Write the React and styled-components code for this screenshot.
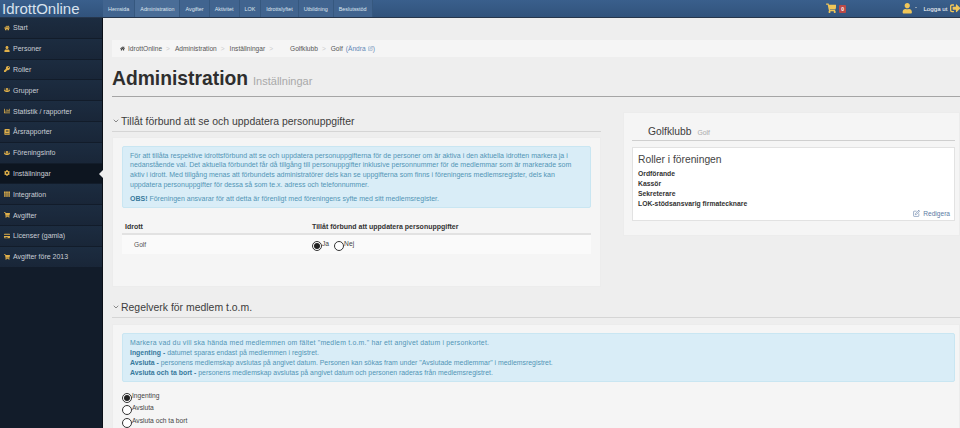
import React from "react";
import styled, { createGlobalStyle } from "styled-components";
import {
  FaHome, FaUser, FaKey, FaUsers, FaChartBar, FaBook, FaCog, FaTh,
  FaShoppingCart, FaCreditCard, FaSignOutAlt,
} from "react-icons/fa";
import { FiEdit, FiChevronDown } from "react-icons/fi";

const GlobalStyle = createGlobalStyle`
  html, body { margin: 0; padding: 0; height: 100%; overflow: hidden; }
  body { font-family: "Liberation Sans", Arial, sans-serif; background: #eeeeee; color: #333; }
  * { box-sizing: border-box; }
`;

const Page = styled.div`
  width: 960px;
  height: 428px;
  display: flex;
  flex-direction: column;
  overflow: hidden;
`;

const TopBar = styled.header`
  height: 18px;
  flex: none;
  display: flex;
  align-items: center;
  background: linear-gradient(#3a5f8c, #31537c);
  border-bottom: 1px solid #26364c;
  color: #fff;
`;

const Logo = styled.div`
  width: 103px;
  flex: none;
  font-size: 15px;
  color: #d8e2ee;
  padding-left: 2px;
`;

const TopNav = styled.nav`
  display: flex;
  height: 17px;
`;

const TopLink = styled.a`
  display: flex;
  align-items: center;
  padding: 0 5px;
  font-size: 5.4px;
  color: #dfe6ef;
  background: ${(p) => (p.$active ? "#4a6d97" : "#41648f")};
  border-right: 1px solid #36587f;
`;

const TopRight = styled.div`
  margin-left: auto;
  display: flex;
  align-items: center;
  color: #f0c659;
  font-size: 10.5px;
`;

const CartBadge = styled.span`
  background: #b94a48;
  color: #fff;
  font-size: 5px;
  font-weight: bold;
  border-radius: 1px;
  padding: 1px 2px;
  margin: 0 56px 0 3px;
`;

const Caret = styled.span`
  width: 0;
  height: 0;
  margin: 0 6px 2px 3px;
  border: 1.5px solid transparent;
  border-top-color: #ddd;
`;

const LogoutText = styled.span`
  font-size: 6.2px;
  color: #fff;
  margin-right: 2px;
`;

const Body = styled.div`
  flex: 1;
  display: flex;
  min-height: 0;
`;

const Sidebar = styled.aside`
  width: 103px;
  flex: none;
  background: #121c2a;
  border-right: 1px solid #0a0f17;
`;

const SideItem = styled.div`
  height: 20.8px;
  position: relative;
  display: flex;
  align-items: center;
  gap: 3px;
  padding-left: 4px;
  font-size: 7px;
  color: #c9ced5;
  background: ${(p) => (p.$active ? "#0d1520" : "linear-gradient(#1c2c40, #192638)")};
  border-bottom: 1px solid #121c2a;
  svg { width: 6px; height: 6px; color: #e0b04a; flex: none; }
`;

const ActiveArrow = styled.span`
  position: absolute;
  right: -1px;
  top: 6px;
  border: 4px solid transparent;
  border-right-color: #eeeeee;
`;

const Main = styled.main`
  flex: 1;
  min-width: 0;
  padding: 22px 0 0 9px;
`;

const Breadcrumb = styled.div`
  height: 17px;
  display: flex;
  align-items: center;
  padding-left: 8px;
  font-size: 6.6px;
  color: #555;
  background: #f5f5f5;
  svg { width: 5px; height: 5px; margin-right: 3px; color: #444; }
`;

const Crumb = styled.span``;

const Sep = styled.span`
  color: #ccc;
  margin: 0 ${(p) => p.$right || 5}px 0 4px;
`;

const EditLink = styled.span`
  color: #5f87b5;
  margin-left: 3px;
  display: inline-flex;
  align-items: center;
  svg { color: #5f87b5; margin: 0 0 0 2px; }
`;

const PageHead = styled.div`
  height: 31px;
  margin-top: 9px;
  border-bottom: 1px solid #a5a5a5;
  display: flex;
  align-items: baseline;
  gap: 5px;
`;

const Title = styled.h1`
  margin: 0;
  font-size: 19.3px;
  line-height: 25px;
  font-weight: bold;
  color: #2e2e2e;
`;

const Subtitle = styled.small`
  font-size: 11px;
  color: #a9a9a9;
`;

const Columns = styled.div`
  display: flex;
  align-items: flex-start;
  margin-top: 14px;
`;

const LeftCol = styled.div`
  width: 489px;
  flex: none;
`;

const RightCol = styled.div`
  width: 337px;
  margin-left: 22px;
`;

const SectionHead = styled.div`
  height: ${(p) => p.$h || 21}px;
  padding-top: ${(p) => p.$pt || 0}px;
  display: flex;
  align-items: center;
  gap: 1px;
  font-size: 10.45px;
  color: #3d3d3d;
  border-bottom: 1px solid #d5d5d5;
  svg { width: 8px; height: 8px; color: #555; }
`;

const Panel = styled.section`
  margin-top: 5px;
  background: #f5f5f5;
  border: 1px solid #ececec;
  padding: 8px 9px 0;
  height: ${(p) => p.$h}px;
`;

const Alert = styled.div`
  background: #d9edf7;
  border: 1px solid #c9e6f2;
  border-radius: 2px;
  color: #5295b6;
  font-size: ${(p) => p.$size}px;
  line-height: ${(p) => p.$lh}px;
  padding: 3.5px 7px;
  p { margin: 0 0 4.5px; }
  p:last-child { margin: 0; }
  b { color: #37799c; }
`;

const AlertLead = styled.div`
  letter-spacing: 0.2px;
`;

const TableHead = styled.div`
  display: grid;
  grid-template-columns: 187px 1fr;
  margin-top: 15px;
  padding: 0 3px 2px;
  border-bottom: 2px solid #e2e2e2;
  font-size: 7px;
  line-height: 8px;
  font-weight: bold;
  color: #333;
`;

const TableRow = styled.div`
  display: grid;
  grid-template-columns: 178px 1fr;
  align-items: center;
  height: 19px;
  background: #fafafa;
  font-size: 6.6px;
  color: #555;
  padding-left: 12px;
`;

const RadioCell = styled.div`
  display: flex;
  padding-top: 1px;
`;

const RadioLabel = styled.label`
  display: flex;
  align-items: flex-start;
  font-size: 6.7px;
  line-height: 8px;
  color: #444;
  margin-right: 5px;
  height: ${(p) => p.$h || "auto"};
`;

const Radio = styled.span`
  width: 10px;
  height: 10px;
  flex: none;
  margin-top: 1px;
  border-radius: 50%;
  border: 1px solid #333;
  background: #fff;
  display: flex;
  align-items: center;
  justify-content: center;
  &::after {
    content: "";
    width: 6px;
    height: 6px;
    border-radius: 50%;
    background: ${(p) => (p.$checked ? "#222" : "transparent")};
  }
`;

const SidePanel = styled.section`
  margin-top: 1px;
  height: 124px;
  background: #f5f5f5;
  border: 1px solid #ececec;
  padding: 0 4px 0 8px;
`;

const ClubHead = styled.div`
  height: 28px;
  padding: 13px 0 0 16px;
  border-bottom: 1px solid #cfcfcf;
  display: flex;
  align-items: baseline;
  gap: 6px;
  font-size: 10.3px;
  color: #3d3d3d;
  small { font-size: 6.8px; color: #aaa; }
`;

const RoleBox = styled.div`
  margin-top: 6px;
  height: 74px;
  background: #fff;
  border: 1px solid #e2e2e2;
  padding: 4.5px 5px 0;
  position: relative;
`;

const RoleTitle = styled.div`
  font-size: 10.3px;
  color: #444;
  line-height: 13px;
  margin-bottom: 3px;
`;

const RoleName = styled.div`
  font-size: 6.8px;
  font-weight: bold;
  line-height: 10.2px;
  color: #333;
`;

const EditRoles = styled.a`
  position: absolute;
  right: 4px;
  bottom: 3px;
  display: flex;
  align-items: center;
  gap: 3px;
  font-size: 6.6px;
  color: #5d7ba3;
  svg { width: 7px; height: 7px; }
`;

const FullPanel = styled(Panel)`
  margin-top: 6px;
  padding-right: 4px;
`;

const RadioList = styled.div`
  margin-top: 10px;
  display: flex;
  flex-direction: column;
`;

const sideItems = [
  ["Start", FaHome],
  ["Personer", FaUser],
  ["Roller", FaKey],
  ["Grupper", FaUsers],
  ["Statistik / rapporter", FaChartBar],
  ["Årsrapporter", FaBook],
  ["Föreningsinfo", FaUsers],
  ["Inställningar", FaCog],
  ["Integration", FaTh],
  ["Avgifter", FaShoppingCart],
  ["Licenser (gamla)", FaCreditCard],
  ["Avgifter före 2013", FaShoppingCart],
];

const topLinks = ["Hemsida", "Administration", "Avgifter", "Aktivitet", "LOK", "Idrottslyftet", "Utbildning", "Beslutsstöd"];

const roles = ["Ordförande", "Kassör", "Sekreterare", "LOK-stödsansvarig firmatecknare"];

export default function App() {
  return (
    <Page>
      <GlobalStyle />
      <TopBar>
        <Logo>IdrottOnline</Logo>
        <TopNav>
          {topLinks.map((l) => (
            <TopLink key={l} $active={l === "Administration"}>{l}</TopLink>
          ))}
        </TopNav>
        <TopRight>
          <FaShoppingCart />
          <CartBadge>0</CartBadge>
          <FaUser />
          <Caret />
          <LogoutText>Logga ut</LogoutText>
          <FaSignOutAlt />
        </TopRight>
      </TopBar>
      <Body>
        <Sidebar>
          {sideItems.map(([label, Icon]) => (
            <SideItem key={label} $active={label === "Inställningar"}>
              <Icon />
              {label}
              {label === "Inställningar" && <ActiveArrow />}
            </SideItem>
          ))}
        </Sidebar>
        <Main>
          <Breadcrumb>
            <FaHome />
            <Crumb>IdrottOnline</Crumb>
            <Sep>&gt;</Sep>
            <Crumb>Administration</Crumb>
            <Sep>&gt;</Sep>
            <Crumb>Inställningar</Crumb>
            <Sep $right={17}>&gt;</Sep>
            <Crumb>Golfklubb</Crumb>
            <Sep>&gt;</Sep>
            <Crumb>Golf</Crumb>
            <EditLink>(Ändra <FiEdit />)</EditLink>
          </Breadcrumb>
          <PageHead>
            <Title>Administration</Title>
            <Subtitle>Inställningar</Subtitle>
          </PageHead>
          <Columns>
            <LeftCol>
              <SectionHead>
                <FiChevronDown />
                Tillåt förbund att se och uppdatera personuppgifter
              </SectionHead>
              <Panel $h={150}>
                <Alert $size={7} $lh={9.7}>
                  <p>
                    För att tillåta respektive idrottsförbund att se och uppdatera personuppgifterna för de personer om är aktiva i den aktuella idrotten markera ja i nedanstående val. Det aktuella förbundet får då tillgång till personuppgifter inklusive personnummer för de medlemmar som är markerade som aktiv i idrott. Med tillgång menas att förbundets administratörer dels kan se uppgifterna som finns i föreningens medlemsregister, dels kan uppdatera personuppgifter för dessa så som te.x. adress och telefonnummer.
                  </p>
                  <p><b>OBS!</b> Föreningen ansvarar för att detta är förenligt med föreningens syfte med sitt medlemsregister.</p>
                </Alert>
                <TableHead>
                  <span>Idrott</span>
                  <span>Tillåt förbund att uppdatera personuppgifter</span>
                </TableHead>
                <TableRow>
                  <span>Golf</span>
                  <RadioCell>
                    <RadioLabel><Radio $checked />Ja</RadioLabel>
                    <RadioLabel><Radio />Nej</RadioLabel>
                  </RadioCell>
                </TableRow>
              </Panel>
            </LeftCol>
            <RightCol>
              <SidePanel>
                <ClubHead>Golfklubb <small>Golf</small></ClubHead>
                <RoleBox>
                  <RoleTitle>Roller i föreningen</RoleTitle>
                  {roles.map((r) => <RoleName key={r}>{r}</RoleName>)}
                  <EditRoles><FiEdit />Redigera</EditRoles>
                </RoleBox>
              </SidePanel>
            </RightCol>
          </Columns>
          <SectionHead $h={31} $pt={10}>
            <FiChevronDown />
            Regelverk för medlem t.o.m.
          </SectionHead>
          <FullPanel $h={110}>
            <Alert $size={6.9} $lh={10}>
              <AlertLead>Markera vad du vill ska hända med medlemmen om fältet "medlem t.o.m." har ett angivet datum i personkortet.</AlertLead>
              <div><b>Ingenting -</b> datumet sparas endast på medlemmen i registret.</div>
              <div><b>Avsluta -</b> personens medlemskap avslutas på angivet datum. Personen kan sökas fram under "Avslutade medlemmar" i medlemsregistret.</div>
              <div><b>Avsluta och ta bort -</b> personens medlemskap avslutas på angivet datum och personen raderas från medlemsregistret.</div>
            </Alert>
            <RadioList>
              <RadioLabel $h="12.4px"><Radio $checked />Ingenting</RadioLabel>
              <RadioLabel $h="12.4px"><Radio />Avsluta</RadioLabel>
              <RadioLabel $h="12.4px"><Radio />Avsluta och ta bort</RadioLabel>
            </RadioList>
          </FullPanel>
        </Main>
      </Body>
    </Page>
  );
}
